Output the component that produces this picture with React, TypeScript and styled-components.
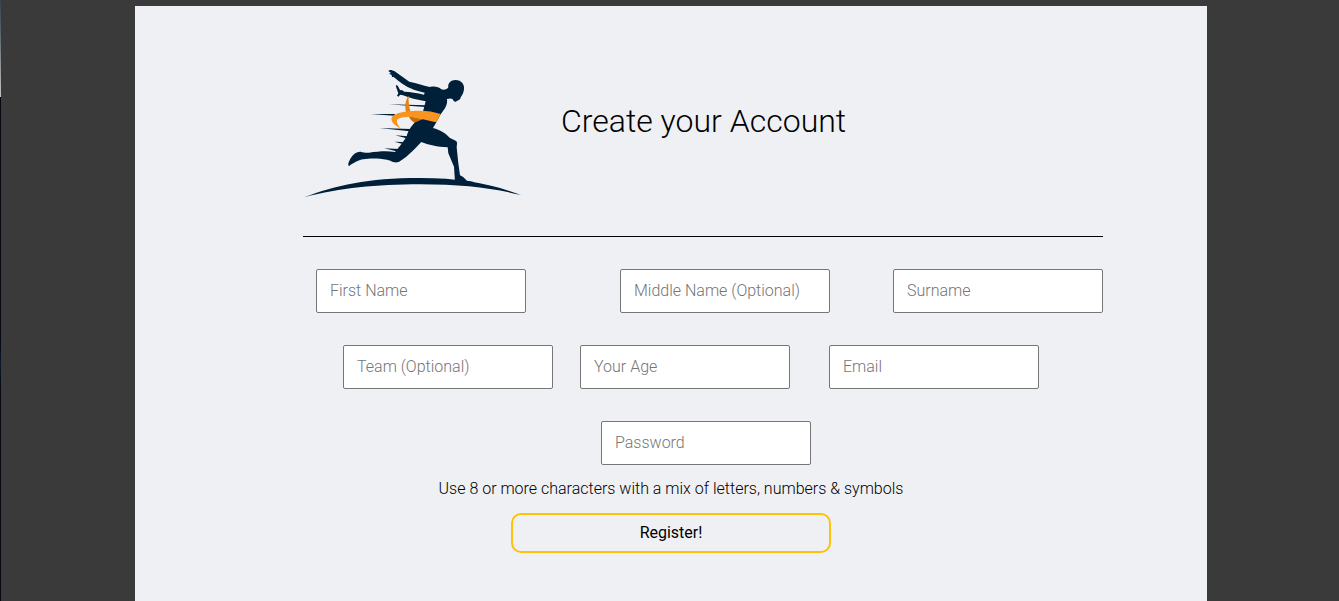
import React from "react";
import styled, { createGlobalStyle } from "styled-components";

const GlobalStyle = createGlobalStyle`
  *, *::before, *::after { box-sizing: border-box; }
  body {
    margin: 0;
    background: #3a3a3a;
    color: #000;
    font-family: Roboto, "Liberation Sans", sans-serif;
    font-weight: 300;
    font-size: 16px;
    line-height: 24px;
  }
`;

const Page = styled.div`
  display: flex;
  min-height: 100vh;
`;

const BackdropEdge = styled.div`
  flex: 0 0 1px;
  background: linear-gradient(#36434c 0, #59636a 32px, #c4c4c4 97px, #05080f 97px, #05080f 340px, #0a1a2c 364px, #05080f 390px);
`;

const Panel = styled.main`
  flex: 1;
  display: flex;
  flex-direction: column;
  align-items: center;
  margin: 6px 132px 0 134px;
  padding: 62px 16px 48px;
  background: #eff0f4;
`;

const Form = styled.form`
  display: flex;
  flex-direction: column;
  align-items: center;
  width: 100%;
  max-width: 864px;
`;

const Section = styled.div`
  width: 100%;
  padding-left: 64px;
`;

const Header = styled.header`
  display: flex;
  align-items: center;
  gap: 38px;
  padding-bottom: 36px;
  border-bottom: 1px solid #000;
`;

const Logo = styled.svg`
  display: block;
  width: 220px;
  height: 132px;
`;

const Title = styled.h1`
  margin: 0;
  padding-bottom: 26px;
  font-size: 32px;
  line-height: 40px;
  font-weight: 300;
`;

const Fields = styled.div`
  display: flex;
  flex-direction: column;
  gap: 32px;
  padding-top: 32px;
`;

const Row = styled.div<{ $columns: string; $indent: number }>`
  display: grid;
  grid-template-columns: ${(p) => p.$columns};
  padding-left: ${(p) => p.$indent}px;
`;

const Input = styled.input`
  width: 210px;
  height: 44px;
  padding: 0 13px 2px;
  border: 1px solid #767676;
  border-radius: 2px;
  background: #fff;
  color: #000;
  font: inherit;
  &::placeholder { color: #757575; opacity: 1; }
`;

const Hint = styled.p`
  margin: 12px 0;
`;

const RegisterButton = styled.button`
  width: 320px;
  height: 40px;
  padding: 0;
  border: 2px solid #ffc107;
  border-radius: 10px;
  background: transparent;
  color: #000;
  font: inherit;
  font-weight: 400;
  cursor: pointer;
`;

type FieldSpec = { name: string; label: string; type?: string };
type RowSpec = { columns: string; indent: number; fields: FieldSpec[] };

const rows: RowSpec[] = [
  {
    columns: "304px 273px 210px",
    indent: 13,
    fields: [
      { name: "firstName", label: "First Name" },
      { name: "middleName", label: "Middle Name (Optional)" },
      { name: "surname", label: "Surname" },
    ],
  },
  {
    columns: "237px 249px 210px",
    indent: 40,
    fields: [
      { name: "team", label: "Team (Optional)" },
      { name: "age", label: "Your Age" },
      { name: "email", label: "Email", type: "email" },
    ],
  },
  {
    columns: "210px",
    indent: 298,
    fields: [{ name: "password", label: "Password", type: "password" }],
  },
];

function RunnerLogo() {
  return (
    <Logo viewBox="24 24 660 396" role="img" aria-label="Runner crossing the finish line">
      <g fill="#001f38">
        <path d="M26 412C125 376 215 354 375 354C500 354 590 372 678 405C590 384 500 373 375 373C240 373 140 384 26 412Z" />
        <path d="M281 133L392 136L390 141Z" />
        <path d="M227 162L300 162L298 167Z" />
        <path d="M253 204L348 207L344 214Z" />
        <path d="M301 226L338 229L334 235Z" />
        <path d="M298 245L326 246L320 251Z" />
        <path d="M268 265L312 267L304 274Z" />
        <path d="M280 33C284 28 292 31 299 34L343 65C365 70 388 77 405 81C418 78 432 81 439 88C447 91 457 88 460 82C458 70 467 60 482 60C499 60 509 73 507 88C506 98 502 105 497 112C496 121 489 120 483 125C478 127 476 123 473 118C469 114 463 116 456 117C458 132 452 143 444 153L436 164L424 187L414 204C435 209 453 221 465 234L482 242C488 245 486 253 485 262L490 310L495 346C503 348 510 357 516 362L537 366L530 369L480 366L477 320L460 280L458 262C427 261 400 254 379 246C362 263 340 288 319 301C312 307 305 308 298 307C288 304 284 300 276 299C248 294 222 295 205 298C190 300 172 310 162 319C157 313 162 303 169 292C176 281 186 274 197 275C205 277 213 279 222 278C249 274 277 272 300 276C312 262 325 246 335 229C339 212 351 196 360 187L380 172L385 151L392 124C367 120 342 113 324 106L315 104L311 110L306 107L310 100L303 80C301 75 306 74 309 79L315 90L322 91L328 95C346 95 367 99 387 104L389 98C358 92 332 80 315 66C306 60 300 53 295 50L291 52L290 45L282 41L288 39Z" />
      </g>
      <path fill="#c66c0c" d="M341 168L372 174L383 178L358 188C350 183 344 176 341 168Z" />
      <path fill="#e38314" d="M341 107C331 119 328 139 334 158L346 154C342 139 340 123 341 107Z" />
      <path fill="#f99420" d="M437 162C412 153 382 150 351 153C319 154 291 163 289 176C290 190 303 198 316 205C307 192 303 184 308 178C318 169 352 169 373 176C391 179 409 183 424 187Z" />
    </Logo>
  );
}

export default function App() {
  return (
    <>
      <GlobalStyle />
      <Page>
        <BackdropEdge />
        <Panel>
          <Form onSubmit={(e: React.FormEvent) => e.preventDefault()}>
            <Section>
              <Header>
                <RunnerLogo />
                <Title>Create your Account</Title>
              </Header>
              <Fields>
                {rows.map((row) => (
                  <Row key={row.fields[0].name} $columns={row.columns} $indent={row.indent}>
                    {row.fields.map((f) => (
                      <Input
                        key={f.name}
                        name={f.name}
                        type={f.type ?? "text"}
                        placeholder={f.label}
                        aria-label={f.label}
                      />
                    ))}
                  </Row>
                ))}
              </Fields>
            </Section>
            <Hint>Use 8 or more characters with a mix of letters, numbers &amp; symbols</Hint>
            <RegisterButton type="submit">Register!</RegisterButton>
          </Form>
        </Panel>
      </Page>
    </>
  );
}
